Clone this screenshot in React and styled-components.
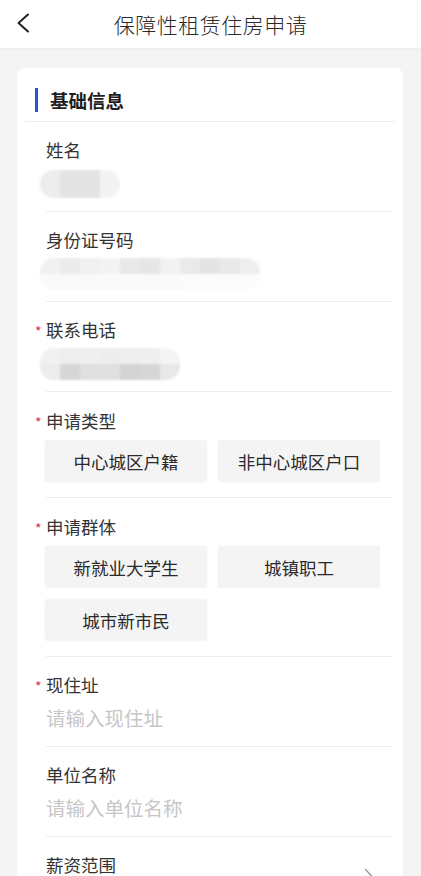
import styled, { createGlobalStyle } from "styled-components";

const GlobalStyle = createGlobalStyle`
  * { box-sizing: border-box; }
  body {
    margin: 0;
    background: #f4f4f4;
    font-family: "Noto Sans CJK SC", "Noto Sans", sans-serif;
    color: #333;
  }
`;

const masks = {
  name: [["#ececec", "#e4e4e4", "#e4e4e4", "#f3f3f3"]],
  idCard: [
    ["#f1f1f1", "#ebebeb", "#f0f0f0", "#f3f3f3", "#e9e9e9", "#e6e6e6", "#f2f2f2", "#eaeaea", "#e4e4e4", "#e9e9e9", "#efefef"],
    ["#f9f9f9", "#f9f9f9", "#f9f9f9", "#f9f9f9", "#fafafa", "#fafafa", "#fafafa", "#fbfbfb", "#fbfbfb", "#fbfbfb", "#fcfcfc"],
  ],
  phone: [
    ["#f1f1f1", "#eeeeee", "#efefef", "#ededed", "#eeeeee", "#efefef", "#f4f4f4"],
    ["#ececec", "#d6d6d6", "#e0e0e0", "#e0e0e0", "#d4d4d4", "#d6d6d6", "#e8e8e8"],
  ],
};

const App = () => {
  return (
    <>
      <GlobalStyle />
      <Header>
        <BackButton>
          <svg width="14" height="20" viewBox="0 0 14 20">
            <polyline
              points="12,1.5 2.5,10 12,18.5"
              fill="none"
              stroke="#222"
              strokeWidth="2"
              strokeLinecap="round"
              strokeLinejoin="round"
            />
          </svg>
        </BackButton>
        <Title>保障性租赁住房申请</Title>
      </Header>
      <Page>
        <Card>
          <SectionTitle>基础信息</SectionTitle>

          <Field>
            <Label>姓名</Label>
            <ValueRow>
              <Mosaic rows={masks.name} $height={28} />
            </ValueRow>
          </Field>

          <Field>
            <Label>身份证号码</Label>
            <ValueRow>
              <Mosaic rows={masks.idCard} $height={32} />
            </ValueRow>
          </Field>

          <Field>
            <Label $required>联系电话</Label>
            <ValueRow>
              <Mosaic rows={masks.phone} $height={32} />
            </ValueRow>
          </Field>

          <Field $options>
            <Label $required>申请类型</Label>
            <OptionGrid>
              <Option>中心城区户籍</Option>
              <Option>非中心城区户口</Option>
            </OptionGrid>
          </Field>

          <Field $options>
            <Label $required>申请群体</Label>
            <OptionGrid>
              <Option>新就业大学生</Option>
              <Option>城镇职工</Option>
              <Option>城市新市民</Option>
            </OptionGrid>
          </Field>

          <Field>
            <Label $required>现住址</Label>
            <ValueRow>
              <Placeholder>请输入现住址</Placeholder>
            </ValueRow>
          </Field>

          <Field>
            <Label>单位名称</Label>
            <ValueRow>
              <Placeholder>请输入单位名称</Placeholder>
            </ValueRow>
          </Field>

          <Field>
            <SelectRow>
              <Label>薪资范围</Label>
              <Arrow width="10" height="18" viewBox="0 0 10 18">
                <polyline
                  points="1.5,1.5 8.5,9 1.5,16.5"
                  fill="none"
                  stroke="#9a9a9a"
                  strokeWidth="1.4"
                  strokeLinecap="round"
                  strokeLinejoin="round"
                />
              </Arrow>
            </SelectRow>
            <ValueRow>
              <Placeholder>请选择薪资范围</Placeholder>
            </ValueRow>
          </Field>
        </Card>
      </Page>
    </>
  );
};

const Mosaic = ({ rows, $height }) => (
  <MosaicBox $height={$height}>
    {rows.map((row, r) => (
      <MosaicRow key={r}>
        {row.map((c, i) => (
          <MosaicCell key={i} style={{ background: c }} />
        ))}
      </MosaicRow>
    ))}
  </MosaicBox>
);

const Header = styled.header`
  height: 48px;
  background: #fff;
  display: flex;
  align-items: center;
  justify-content: center;
  position: relative;
  box-shadow: 0 1px 3px rgba(0, 0, 0, 0.04);
`;

const BackButton = styled.div`
  position: absolute;
  left: 16px;
  top: 13px;
  width: 14px;
  height: 20px;
  display: flex;
`;

const Title = styled.h1`
  margin: 0;
  font-size: 21px;
  font-weight: 300;
  color: #2a2a2a;
  letter-spacing: 0.5px;
`;

const Page = styled.main`
  padding: 20px 18px 40px 17px;
`;

const Card = styled.section`
  background: #fff;
  border-radius: 8px;
  overflow: hidden;
`;

const SectionTitle = styled.h2`
  margin: 0 8px;
  padding: 20px 0 10px 10px;
  height: 54px;
  border-bottom: 1px solid #ededed;
  font-size: 18.5px;
  font-weight: 700;
  color: #1e1e1e;
  display: flex;
  align-items: center;

  &::before {
    content: "";
    width: 3px;
    height: 24px;
    background: #2457c5;
    margin-right: 12px;
  }
`;

const Field = styled.div`
  margin: 0 10px 0 29px;
  padding: ${(p) => (p.$options ? "18px 0 15px" : "17px 0 8px")};
  border-bottom: 1px solid #ededed;
`;

const Label = styled.div`
  position: relative;
  font-size: 17.5px;
  line-height: 22px;
  color: #333;

  &::before {
    content: ${(p) => (p.$required ? '"*"' : "none")};
    position: absolute;
    left: -11px;
    top: 1px;
    font-size: 14px;
    color: #d9304a;
  }
`;

const ValueRow = styled.div`
  height: 42px;
  display: flex;
  align-items: center;
`;

const SelectRow = styled.div`
  display: flex;
  justify-content: space-between;
  align-items: flex-start;
`;

const Arrow = styled.svg`
  margin: 14px 19px 0 0;
`;

const Placeholder = styled.span`
  font-size: 19.5px;
  color: #c6c6c6;
`;

const MosaicBox = styled.div`
  margin-left: -6px;
  margin-top: 4px;
  height: ${(p) => p.$height}px;
  display: flex;
  flex-direction: column;
  border-radius: 14px;
  overflow: hidden;
  filter: blur(1px);
`;

const MosaicRow = styled.div`
  display: flex;
  flex: 1;
`;

const MosaicCell = styled.div`
  width: 20px;
`;

const OptionGrid = styled.div`
  margin-top: 8px;
  display: grid;
  grid-template-columns: repeat(2, 162px);
  gap: 11px;
  margin-left: -1px;
`;

const Option = styled.div`
  height: 42px;
  display: flex;
  align-items: center;
  justify-content: center;
  background: #f4f4f4;
  border-radius: 3px;
  box-shadow: 0 0 2px rgba(0, 0, 0, 0.06);
  font-size: 17.5px;
  color: #2a2a2a;
`;

export default App;
